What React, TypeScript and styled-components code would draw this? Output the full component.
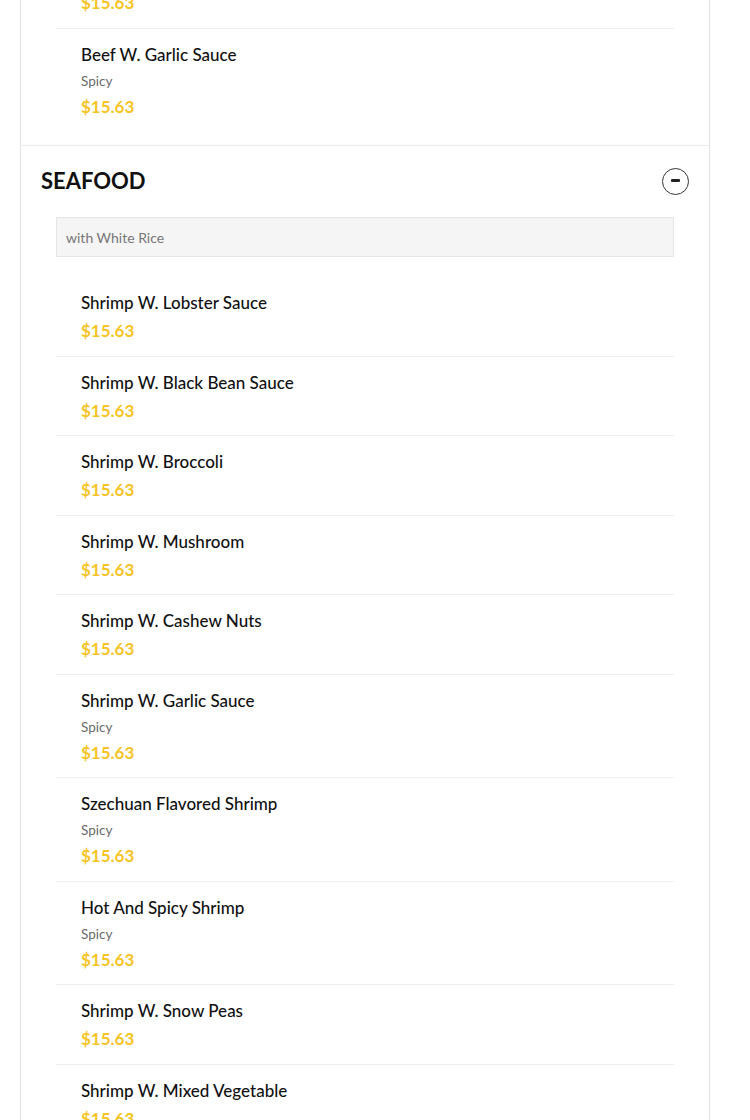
import React from "react";
import styled, { createGlobalStyle } from "styled-components";

const GlobalStyle = createGlobalStyle`
  html, body { margin: 0; padding: 0; background: #fff; }
  body { font-family: "Lato", "Noto Sans", sans-serif; color: #111; overflow: hidden; }
`;

const Page = styled.div`
  width: 750px;
  height: 1120px;
  overflow: hidden;
  padding: 0 40px 0 20px;
  box-sizing: border-box;
`;

const Menu = styled.div`
  margin-top: -52px;
  border: 1px solid #e2e2e2;
  border-bottom: none;
  background: #fff;
`;

const Section = styled.section<{ $first?: boolean }>`
  border-top: ${(p) => (p.$first ? "none" : "1px solid #ececec")};
  padding-bottom: 14px;
`;

const Header = styled.div`
  display: flex;
  align-items: center;
  justify-content: space-between;
  padding: 20px 20px 21px 20px;
  height: 30px;
`;

const Title = styled.h2`
  margin: 0;
  font-size: 22px;
  font-weight: 700;
  letter-spacing: 0;
  line-height: 30px;
  color: #111;
`;

const ToggleButton = styled.button`
  width: 27px;
  height: 27px;
  border-radius: 50%;
  border: 1px solid #333;
  background: #fff;
  padding: 0;
  display: flex;
  align-items: center;
  justify-content: center;
  cursor: pointer;
`;

const Dash = styled.span`
  display: block;
  width: 9px;
  height: 2.5px;
  border-radius: 1px;
  background: #222;
  margin-top: -1px;
`;

const Body = styled.div`
  padding: 0 35px;
`;

const Note = styled.div`
  height: 38px;
  border: 1px solid #e6e6e6;
  background: #f5f5f5;
  display: flex;
  align-items: center;
  padding-left: 9px;
  font-size: 14px;
  color: #777;
  margin-bottom: 20px;
`;

const List = styled.ul`
  list-style: none;
  margin: 0;
  padding: 0;
`;

const Item = styled.li<{ $last?: boolean }>`
  padding: 15px 25px 13px;
  border-bottom: ${(p) => (p.$last ? "none" : "1px solid #eeeeee")};
  display: flex;
  flex-direction: column;
`;

const Name = styled.div`
  font-size: 17px;
  font-weight: 500;
  line-height: 22px;
  color: #111;
`;

const Tag = styled.div`
  margin-top: 6px;
  font-size: 13.5px;
  line-height: 18px;
  color: #6a6a6a;
`;

const Price = styled.div`
  margin-top: 5px;
  font-size: 17px;
  font-weight: 700;
  line-height: 23.5px;
  color: #f6c426;
`;

type Dish = { name: string; spicy?: boolean; price: string };

const beef: Dish[] = [
  { name: "Beef W. Mixed Vegetable", price: "$15.63" },
  { name: "Beef W. Garlic Sauce", spicy: true, price: "$15.63" },
];

const seafood: Dish[] = [
  { name: "Shrimp W. Lobster Sauce", price: "$15.63" },
  { name: "Shrimp W. Black Bean Sauce", price: "$15.63" },
  { name: "Shrimp W. Broccoli", price: "$15.63" },
  { name: "Shrimp W. Mushroom", price: "$15.63" },
  { name: "Shrimp W. Cashew Nuts", price: "$15.63" },
  { name: "Shrimp W. Garlic Sauce", spicy: true, price: "$15.63" },
  { name: "Szechuan Flavored Shrimp", spicy: true, price: "$15.63" },
  { name: "Hot And Spicy Shrimp", spicy: true, price: "$15.63" },
  { name: "Shrimp W. Snow Peas", price: "$15.63" },
  { name: "Shrimp W. Mixed Vegetable", price: "$15.63" },
];

const DishList = ({ dishes }: { dishes: Dish[] }) => (
  <List>
    {dishes.map((d, i) => (
      <Item key={d.name} $last={i === dishes.length - 1}>
        <Name>{d.name}</Name>
        {d.spicy && <Tag>Spicy</Tag>}
        <Price>{d.price}</Price>
      </Item>
    ))}
  </List>
);

export default function App() {
  return (
    <>
      <GlobalStyle />
      <Page>
        <Menu>
          <Section $first>
            <Body>
              <DishList dishes={beef} />
            </Body>
          </Section>
          <Section>
            <Header>
              <Title>SEAFOOD</Title>
              <ToggleButton aria-label="Collapse">
                <Dash />
              </ToggleButton>
            </Header>
            <Body>
              <Note>with White Rice</Note>
              <DishList dishes={seafood} />
            </Body>
          </Section>
        </Menu>
      </Page>
    </>
  );
}
